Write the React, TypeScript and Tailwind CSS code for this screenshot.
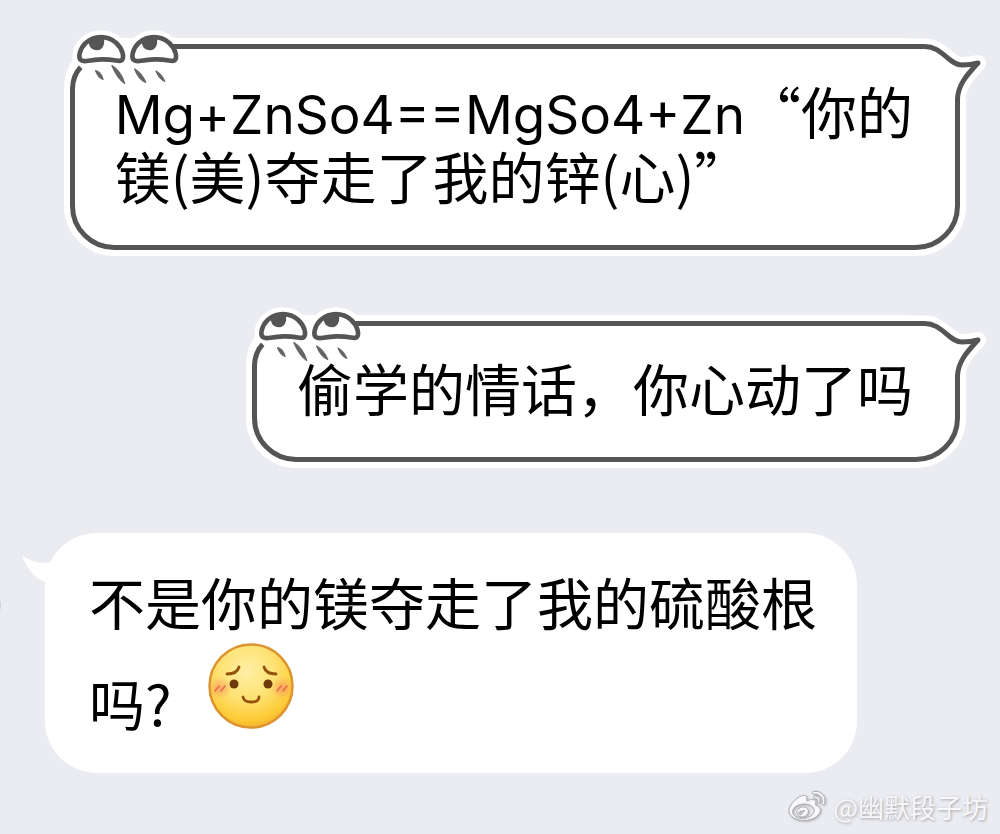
import type { ReactNode } from 'react'
import { FaWeibo } from 'react-icons/fa'

const cjk = "font-['Noto_Sans_CJK_SC',sans-serif]"

function Latin({ children }: { children: ReactNode }) {
  return <span className="font-['Inter','Noto_Sans_CJK_SC',sans-serif] text-[53px] leading-none">{children}</span>
}

function PeekingEyes() {
  const eye = 'M64 121 C53 114 58 87 78 68 C104 46 142 46 168 68 C188 86 194 112 185 121 C176 127 166 117 124 118 C84 119 74 128 64 121 Z'
  return (
    <svg className="absolute -top-[29px] -left-[15px] h-[87px] w-[120px]" viewBox="0 0 360 261" aria-hidden="true">
      <path d="M20 261 V195 Q24 150 46 128 L60 60 H352 V150 L210 261 Z" fill="#fff" />
      <path d={eye} fill="#fff" stroke="#fff" strokeWidth="42" strokeLinejoin="round" />
      <path d={eye} transform="translate(159 0)" fill="#fff" stroke="#fff" strokeWidth="42" strokeLinejoin="round" />
      <path d="M340 79.500 H360" stroke="#555" strokeWidth="15" />
      {[0, 159].map((x) => (
        <g key={x} transform={`translate(${x} 0)`}>
          <path d={eye} fill="#fff" stroke="#555" strokeWidth="14" strokeLinejoin="round" />
          <path d="M87 58 Q110 45 133 58 L132 72 Q127 91 110 91 Q91 90 87 72 Z" fill="#555" />
        </g>
      ))}
      <path d="M37.500 261 V205 Q39 166 62 142" fill="none" stroke="#555" strokeWidth="15" />
      <g fill="#666" stroke="#666" strokeWidth="4" strokeLinejoin="round">
        <path d="M107 152 Q124 158 129 178 Q115 173 107 152 Z" />
        <path d="M156 137 Q183 154 194 190 Q172 175 156 137 Z" />
        <path d="M224 147 Q246 160 257 187 Q236 179 224 147 Z" />
        <path d="M288 153 Q307 165 314 184 Q298 177 288 153 Z" />
      </g>
    </svg>
  )
}

function SpikeTail() {
  return (
    <svg className="absolute -top-[14px] -right-[35px] h-[90px] w-[98px]" viewBox="0 0 98 90" aria-hidden="true">
      <path d="M0 11.500 H32 C50 11 57 30 70 30 Q79 30 86 28 C78 37 66 48 65.500 64 V90 H0 Z" fill="#fff" />
      <path d="M0 11.500 H32 C50 11 57 30 70 30 Q79 30 86 28 C78 37 66 48 65.500 64 V90" fill="none" stroke="#fff" strokeWidth="16" strokeLinejoin="round" />
      <path d="M0 11.500 H32 C50 11 57 30 70 30 Q79 30 86 28 C78 37 66 48 65.500 64 V90" fill="none" stroke="#555" strokeWidth="5" strokeLinejoin="round" />
    </svg>
  )
}

function SentBubble({ children }: { children: ReactNode }) {
  return (
    <article className="relative w-fit self-end rounded-[44px] rounded-tr-[60px] border-[5px] border-[#555] bg-white pt-7 pr-[42px] pb-[38px] pl-10 ring-[6px] ring-white">
      <PeekingEyes />
      <SpikeTail />
      <p className="relative">{children}</p>
    </article>
  )
}

function BlushFace() {
  return (
    <svg className="mb-2 ml-9 size-[86px]" viewBox="0 0 86 86" role="img" aria-label="害羞">
      <defs>
        <radialGradient id="skin" cx="45%" cy="32%" r="70%">
          <stop offset="0" stopColor="#fff0a6" />
          <stop offset="0.500" stopColor="#fee171" />
          <stop offset="0.850" stopColor="#fdcb35" />
          <stop offset="1" stopColor="#f3ad30" />
        </radialGradient>
        <radialGradient id="blush">
          <stop offset="0" stopColor="#f88c60" stopOpacity="0.700" />
          <stop offset="1" stopColor="#f99c60" stopOpacity="0" />
        </radialGradient>
      </defs>
      <circle cx="43" cy="43" r="41.500" fill="url(#skin)" stroke="#dc9430" strokeWidth="2.500" />
      <circle cx="12" cy="45" r="12" fill="url(#blush)" />
      <circle cx="74" cy="45" r="12" fill="url(#blush)" />
      <g fill="none" stroke="#94520d" strokeWidth="2.800" strokeLinecap="round">
        <path d="M19 31 Q29 31 31 24" />
        <path d="M56 24 Q58 31 68 31" />
        <path d="M35 54 Q36 59 43 59 Q51 59 51 54" />
      </g>
      <circle cx="26" cy="41" r="4.500" fill="#70390c" />
      <circle cx="60" cy="41" r="4.500" fill="#70390c" />
      <path d="M7 48 l4 -5 M13 48 l4 -5 M69 48 l4 -5 M75 48 l4 -5" stroke="#e66b50" strokeWidth="1.500" strokeLinecap="round" />
    </svg>
  )
}

export default function App() {
  return (
    <main lang="zh-CN" className={`relative flex min-h-screen flex-col overflow-hidden bg-[#ebecf1] pt-11 text-[56px] leading-[65px] text-black ${cjk}`}>
      <section className="flex flex-col gap-[71px] pr-10 pl-[45px]">
        <SentBubble>
          <Latin>Mg+ZnSo4==MgSo4+Zn</Latin>“你的
          <br />
          镁(美)夺走了我的锌(心)”
        </SentBubble>
        <SentBubble>偷学的情话，你心动了吗</SentBubble>
        <article className="relative w-fit rounded-[52px] bg-white pt-[35px] pr-10 pb-9 pl-11">
          <svg className="absolute top-5 -left-6 h-10 w-12" viewBox="0 0 48 40" aria-hidden="true">
            <path d="M1 2 Q13 12 30 9 L48 12 L44 40 H24 V29 Q8 23 1 2 Z" fill="#fff" />
          </svg>
          <p className="relative">不是你的镁夺走了我的硫酸根</p>
          <p className="relative mt-[10px] flex items-end">
            <span className="pb-[3px]">吗?</span>
            <BlushFace />
          </p>
        </article>
      </section>
      <span className="absolute top-[590px] -left-[29px] size-[30px] rounded-full bg-[#d0d1d5]" aria-hidden="true" />
      <footer className="mt-4 flex items-center justify-end gap-2 pr-3 text-[26px] leading-8 text-[#f8f8fa]">
        <FaWeibo className="h-9 w-9 overflow-visible fill-[#f8f8fa] stroke-[#a9abb0] stroke-[14px] drop-shadow-[1px_1px_1px_#b0b1b5]" aria-hidden="true" />
        <span className="[text-shadow:1px_1px_3px_#a0a1a6]">@幽默段子坊</span>
      </footer>
    </main>
  )
}
